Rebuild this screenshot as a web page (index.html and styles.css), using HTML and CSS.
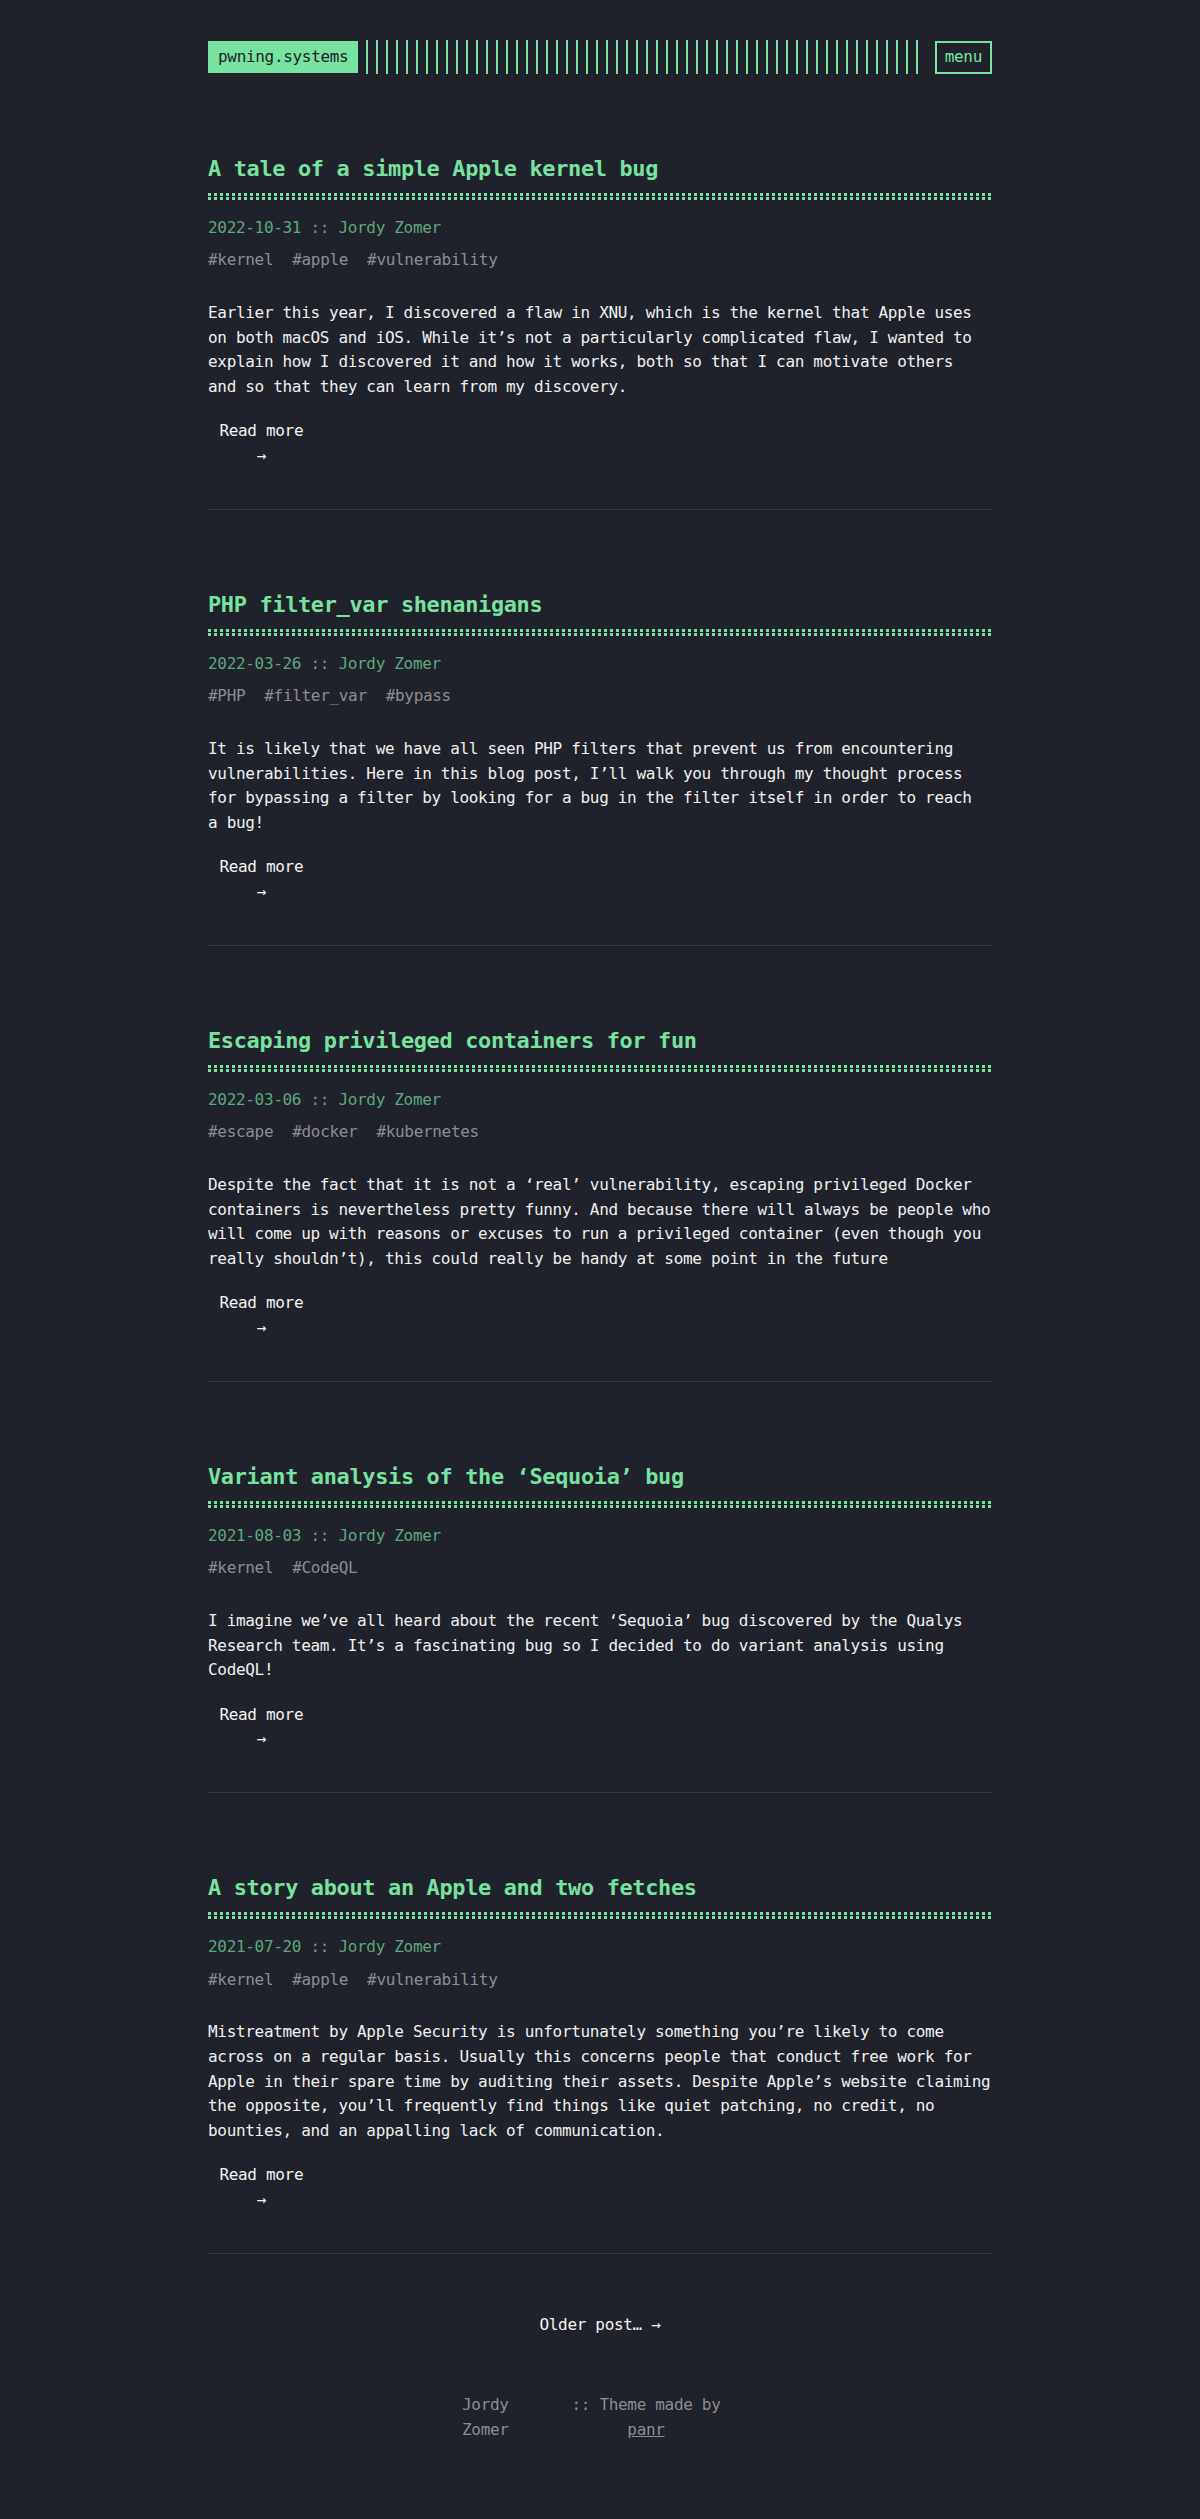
FILE: index.html
```html
<!DOCTYPE html>
<html lang="en">
<head>
<meta charset="utf-8">
<title>pwning.systems</title>
<link rel="stylesheet" href="styles.css">
</head>
<body>
<div class="container">
  <header class="header">
    <a class="logo" href="#">pwning.systems</a>
    <div class="logo-bars"></div>
    <span class="menu-trigger">menu</span>
  </header>

  <main class="posts">
    <article class="post">
      <h2 class="post-title">A tale of a simple Apple kernel bug</h2>
      <div class="post-dots"></div>
      <div class="post-meta">2022-10-31 :: Jordy Zomer</div>
      <div class="post-tags"><span>#kernel</span><span>#apple</span><span>#vulnerability</span></div>
      <p class="post-content">Earlier this year, I discovered a flaw in XNU, which is the kernel that Apple uses on both macOS and iOS. While it’s not a particularly complicated flaw, I wanted to explain how I discovered it and how it works, both so that I can motivate others and&nbsp;so that they can learn from my discovery.</p>
      <a class="read-more" href="#">Read more →</a>
    </article>

    <article class="post">
      <h2 class="post-title">PHP filter_var shenanigans</h2>
      <div class="post-dots"></div>
      <div class="post-meta">2022-03-26 :: Jordy Zomer</div>
      <div class="post-tags"><span>#PHP</span><span>#filter_var</span><span>#bypass</span></div>
      <p class="post-content">It is likely that we have all seen PHP filters that prevent us from encountering vulnerabilities. Here in this blog post, I’ll walk you through my thought process for bypassing a filter by looking for a bug in the filter itself in order to reach a&nbsp;bug!</p>
      <a class="read-more" href="#">Read more →</a>
    </article>

    <article class="post">
      <h2 class="post-title">Escaping privileged containers for fun</h2>
      <div class="post-dots"></div>
      <div class="post-meta">2022-03-06 :: Jordy Zomer</div>
      <div class="post-tags"><span>#escape</span><span>#docker</span><span>#kubernetes</span></div>
      <p class="post-content">Despite the fact that it is not a ‘real’ vulnerability, escaping privileged Docker containers is nevertheless pretty funny. And because there will always be people who will come up with reasons or excuses to run a privileged container (even though you really shouldn’t), this could really be handy at some point in the future</p>
      <a class="read-more" href="#">Read more →</a>
    </article>

    <article class="post">
      <h2 class="post-title">Variant analysis of the ‘Sequoia’ bug</h2>
      <div class="post-dots"></div>
      <div class="post-meta">2021-08-03 :: Jordy Zomer</div>
      <div class="post-tags"><span>#kernel</span><span>#CodeQL</span></div>
      <p class="post-content">I imagine we’ve all heard about the recent ‘Sequoia’ bug discovered by the Qualys Research team. It’s a fascinating bug so I decided to do variant analysis using CodeQL!</p>
      <a class="read-more" href="#">Read more →</a>
    </article>

    <article class="post">
      <h2 class="post-title">A story about an Apple and two fetches</h2>
      <div class="post-dots"></div>
      <div class="post-meta">2021-07-20 :: Jordy Zomer</div>
      <div class="post-tags"><span>#kernel</span><span>#apple</span><span>#vulnerability</span></div>
      <p class="post-content">Mistreatment by Apple Security is unfortunately something you’re likely to come across on a regular basis. Usually this concerns people that conduct free work for Apple in their spare time by auditing their assets. Despite Apple’s website claiming the opposite, you’ll frequently find things like quiet patching, no credit, no bounties, and an appalling lack of communication.</p>
      <a class="read-more" href="#">Read more →</a>
    </article>
  </main>

  <div class="pagination"><a href="#">Older post… →</a></div>

  <footer class="footer">
    <span class="copy-user">Jordy Zomer</span>
    <span class="copy-theme">:: Theme made by <a href="#">panr</a></span>
  </footer>
</div>
</body>
</html>
```

FILE: styles.css
```css
html, body {
  margin: 0;
  padding: 0;
}

body {
  background: #1f222a;
  color: #f0f0f0;
  font-family: "DejaVu Sans Mono", "Liberation Mono", monospace;
  font-size: 16px;
  line-height: 1.54;
  letter-spacing: -0.02em;
}

a {
  color: inherit;
  text-decoration: none;
}

.container {
  max-width: 864px;
  margin: 0 auto;
  padding: 40px;
  box-sizing: border-box;
}

.header {
  display: flex;
  align-items: center;
}

.logo {
  background: #78e2a0;
  color: #1f222a;
  padding: 4px 10px;
  line-height: 24.64px;
  white-space: nowrap;
}

.logo-bars {
  flex: 1;
  align-self: stretch;
  margin: 0 10px 0 8px;
  background: repeating-linear-gradient(90deg, #78e2a0 0, #78e2a0 2px, transparent 2px, transparent 10px);
}

.menu-trigger {
  color: #78e2a0;
  border: 2px solid #78e2a0;
  padding: 2px 8px;
  line-height: 24.64px;
  margin-top: 1px;
}

.posts {
  margin-top: 80px;
}

.post {
  padding-bottom: 40px;
  border-bottom: 1px solid #363941;
}

.post + .post {
  margin-top: 80px;
}

.post-title {
  margin: 0;
  color: #78e2a0;
  font-size: 21.9px;
  font-weight: bold;
  line-height: 29px;
  padding-bottom: 10px;
}

.post-dots {
  height: 7px;
  background-image:
    linear-gradient(90deg, #78e2a0 50%, transparent 50%),
    linear-gradient(90deg, #78e2a0 50%, transparent 50%);
  background-size: 6px 3px, 6px 3px;
  background-position: 0 0, 0 4px;
  background-repeat: repeat-x;
}

.post-meta {
  margin-top: 16px;
  color: #5da87d;
}

.post-tags {
  margin-top: 8px;
  display: flex;
  gap: 19px;
  color: #8c8d92;
}

.post-content {
  margin: 28px 0 0;
}

.read-more {
  display: inline-block;
  width: 9ch;
  margin: 20px 0 0 10px;
  text-align: center;
  color: #f4f4f4;
}

.pagination {
  margin-top: 59px;
  text-align: center;
  color: #f4f4f4;
}

.footer {
  margin-top: 56px;
  display: flex;
  justify-content: center;
  align-items: flex-start;
  padding-right: 17px;
  color: #8c8d92;
}

.copy-user {
  width: 100px;
  margin-right: 9px;
}

.copy-theme {
  width: 150px;
  text-align: center;
}

.copy-theme a {
  text-decoration: underline;
}
```
